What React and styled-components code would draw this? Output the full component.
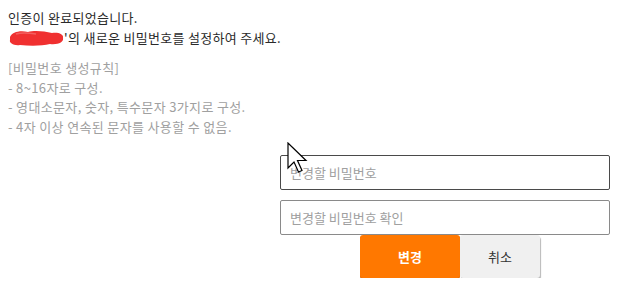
import React from "react";
import styled, { createGlobalStyle } from "styled-components";

const GlobalStyle = createGlobalStyle`
  body {
    margin: 8px;
    background: #ffffff;
    font-family: "Malgun Gothic", "Noto Sans CJK KR", "Noto Sans", sans-serif;
  }
`;

const StyledPage = styled.div`
  position: relative;
  display: flex;
  flex-direction: column;
`;

const StyledMessage = styled.div`
  font-size: 13px;
  line-height: 20px;
  letter-spacing: 0.3px;
  color: #2a2a2a;
`;

const StyledLine = styled.div`
  display: flex;
  align-items: center;
  white-space: nowrap;
`;

const StyledScribble = styled.svg`
  width: 57px;
  height: 18px;
  margin-right: -1px;
  flex-shrink: 0;
`;

const StyledRules = styled.div`
  margin-top: 10px;
  font-size: 13px;
  line-height: 19.7px;
  letter-spacing: 0.35px;
  color: #a0a0a0;
`;

const StyledForm = styled.div`
  display: flex;
  flex-direction: column;
  width: 330px;
  margin: 18px 0 0 272px;
`;

const StyledInput = styled.input`
  box-sizing: border-box;
  width: 100%;
  height: 35px;
  padding: 0 9px;
  margin-bottom: ${(props) => props.gap || "0px"};
  border: 1px solid ${(props) => (props.focused ? "#4a4a4a" : "#8a8a8a")};
  border-radius: 2px;
  font-family: inherit;
  font-size: 13px;
  color: #333333;
  outline: none;

  &::placeholder {
    color: #a0a0a0;
  }
`;

const StyledButtons = styled.div`
  display: flex;
  padding-left: 80px;
`;

const StyledButton = styled.button`
  width: ${(props) => props.width};
  height: 43px;
  border: none;
  border-radius: 3px;
  font-family: inherit;
  font-size: 13px;
  font-weight: ${(props) => (props.primary ? "bold" : "normal")};
  color: ${(props) => (props.primary ? "#ffffff" : "#333333")};
  background: ${(props) => (props.primary ? "#ff7800" : "#f0f0f0")};
  box-shadow: ${(props) =>
    props.primary ? "0 1px 0 #d86400" : "1px 2px 1px rgba(0,0,0,0.28)"};
  cursor: pointer;
`;

const StyledCursor = styled.svg`
  position: absolute;
  left: 279px;
  top: 134px;
  width: 22px;
  height: 32px;
`;

const App = () => {
  return (
    <>
      <GlobalStyle />
      <StyledPage>
        <StyledMessage>
          <StyledLine>인증이 완료되었습니다.</StyledLine>
          <StyledLine>
            <StyledScribble viewBox="0 0 57 18">
              <path
                d="M2 8 C4 3 12 1 20 3 C26 1 36 2 44 4 C50 3 56 5 55 9 C56 13 50 16 42 15 C34 17 22 17 12 16 C6 17 1 14 2 11 Z"
                fill="#f03030"
              />
              <path d="M8 5 C14 3 22 4 28 5" stroke="#f26060" strokeWidth="1.5" fill="none" />
            </StyledScribble>
            '의 새로운 비밀번호를 설정하여 주세요.
          </StyledLine>
        </StyledMessage>
        <StyledRules>
          <div>[비밀번호 생성규칙]</div>
          <div>- 8~16자로 구성.</div>
          <div>- 영대소문자, 숫자, 특수문자 3가지로 구성.</div>
          <div>- 4자 이상 연속된 문자를 사용할 수 없음.</div>
        </StyledRules>
        <StyledForm>
          <StyledInput type="password" placeholder="변경할 비밀번호" focused gap="10px" />
          <StyledInput type="password" placeholder="변경할 비밀번호 확인" />
          <StyledButtons>
            <StyledButton primary width="100px">변경</StyledButton>
            <StyledButton width="80px">취소</StyledButton>
          </StyledButtons>
        </StyledForm>
        <StyledCursor viewBox="0 0 22 32">
          <path
            d="M1 1 L1 26 L7 20 L11.5 30 L15 28.5 L10.5 18.5 L19 18.5 Z"
            fill="#ffffff"
            stroke="#000000"
            strokeWidth="1.2"
            strokeLinejoin="miter"
          />
        </StyledCursor>
      </StyledPage>
    </>
  );
};

export default App;
